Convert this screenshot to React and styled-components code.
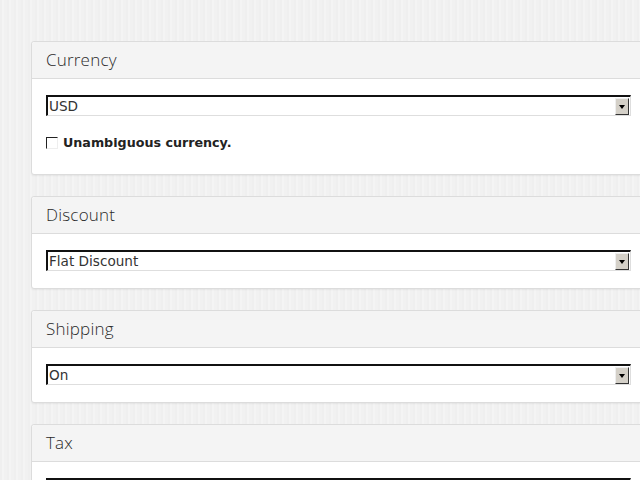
import React from 'react'
import styled, { createGlobalStyle } from 'styled-components'

const GlobalStyle = createGlobalStyle`
    html, body {
        margin: 0;
        padding: 0;
        overflow: hidden;
    }
    body {
        background-color: #f1f1f1;
        background-image: repeating-linear-gradient(90deg, #efefef 0px, #efefef 2px, #f4f4f4 2px, #f4f4f4 4px, #f1f1f1 4px, #f1f1f1 7px);
        font-family: "DejaVu Sans", sans-serif;
    }
`

const Page = styled.div`
    padding: 41px 0 0 31px;
    display: flex;
    flex-direction: column;
    gap: 21px;
    width: 620px;
`

const Panel = styled.section`
    background: #fff;
    border: 1px solid #dcdcdc;
    border-radius: 3px;
    box-shadow: 0 1px 2px rgba(0,0,0,0.06);
    width: 614px;
    flex-shrink: 0;
`

const Header = styled.div`
    background: #f4f4f4;
    border-bottom: 1px solid #dcdcdc;
    height: 36px;
    display: flex;
    align-items: center;
    padding-left: 14px;
    border-radius: 3px 3px 0 0;
`

const Title = styled.h2`
    margin: 0 0 1px;
    font-family: "Open Sans", sans-serif;
    font-weight: 300;
    font-size: 17px;
    color: #2a2a2a;
    letter-spacing: 0.2px;
`

const Body = styled.div`
    padding: 16px 15px ${p => (p.$tall ? '24px' : '17px')} 14px;
`

const Select = styled.div`
    height: 18px;
    border-style: solid;
    border-width: 2px 1px 1px 2px;
    border-color: #111 #dedede #dedede #111;
    display: flex;
    align-items: center;
    justify-content: space-between;
    background: #fff;
`

const Value = styled.span`
    font-size: 13.6px;
    color: #333;
    padding-left: 1px;
`

const Arrow = styled.span`
    width: 14px;
    height: 17px;
    margin-right: 1px;
    background: #d4d0c8;
    border-style: solid;
    border-width: 1px;
    border-color: #eee #333 #333 #eee;
    display: flex;
    align-items: center;
    justify-content: center;
    box-sizing: border-box;

    &::after {
        content: '';
        border-left: 3.5px solid transparent;
        border-right: 3.5px solid transparent;
        border-top: 4px solid #000;
        margin-top: 1px;
    }
`

const CheckRow = styled.label`
    display: flex;
    align-items: center;
    gap: 5px;
    margin-top: 19px;
    font-size: 12.7px;
    font-weight: bold;
    color: #222;
`

const Box = styled.span`
    width: 10px;
    height: 10px;
    border-style: solid;
    border-width: 1px;
    border-color: #222 #eeeeee #eeeeee #222;
    background: #fff;
`

const SelectField = ({ value }) => (
    <Select>
        <Value>{value}</Value>
        <Arrow />
    </Select>
)

const panels = [
    { title: 'Currency', value: 'USD', check: 'Unambiguous currency.' },
    { title: 'Discount', value: 'Flat Discount' },
    { title: 'Shipping', value: 'On' },
    { title: 'Tax', value: 'Off' },
]

const App = () => (
    <>
        <GlobalStyle />
        <Page>
            {panels.map(p => (
                <Panel key={p.title}>
                    <Header>
                        <Title>{p.title}</Title>
                    </Header>
                    <Body $tall={!!p.check}>
                        <SelectField value={p.value} />
                        {p.check && (
                            <CheckRow>
                                <Box />
                                {p.check}
                            </CheckRow>
                        )}
                    </Body>
                </Panel>
            ))}
        </Page>
    </>
)

export default App
